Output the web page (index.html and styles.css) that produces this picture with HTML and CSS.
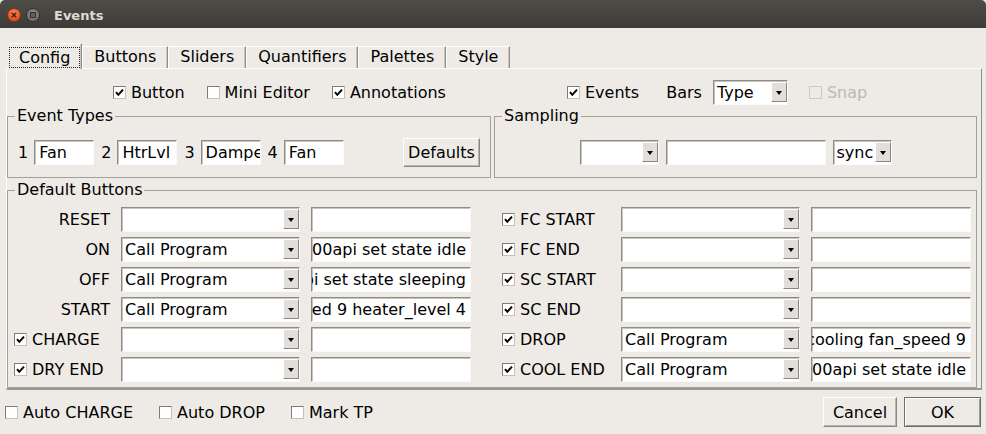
FILE: index.html
```html
<!DOCTYPE html>
<html>
<head>
<meta charset="utf-8">
<link rel="stylesheet" href="styles.css">
</head>
<body>
<div class="window">
  <div class="titlebar">
    <span class="tb-btn tb-close"><svg width="12" height="12" viewBox="0 0 12 12"><path d="M3.8 3.8 L8.2 8.2 M8.2 3.8 L3.8 8.2" stroke="#4a1a08" stroke-width="1.4" fill="none"/></svg></span>
    <span class="tb-btn tb-max"><span class="sq"></span></span>
    <span class="tb-title">Events</span>
  </div>

  <div class="tabs">
    <div class="tab sel"><span class="focus">Config</span></div>
    <div class="tab">Buttons</div>
    <div class="tab">Sliders</div>
    <div class="tab">Quantifiers</div>
    <div class="tab">Palettes</div>
    <div class="tab">Style</div>
  </div>

  <div class="pane">
    <div class="toprow">
      <div class="tr-left">
        <span class="chk"><span class="cb"><svg width="11" height="11" viewBox="0 0 11 11"><path d="M2 5.2 L4.3 7.8 L9 2.6" fill="none" stroke="#000" stroke-width="2"/></svg></span>Button</span>
        <span class="chk gap22"><span class="cb"></span>Mini Editor</span>
        <span class="chk gap22"><span class="cb"><svg width="11" height="11" viewBox="0 0 11 11"><path d="M2 5.2 L4.3 7.8 L9 2.6" fill="none" stroke="#000" stroke-width="2"/></svg></span>Annotations</span>
      </div>
      <div class="tr-right">
        <span class="chk"><span class="cb"><svg width="11" height="11" viewBox="0 0 11 11"><path d="M2 5.2 L4.3 7.8 L9 2.6" fill="none" stroke="#000" stroke-width="2"/></svg></span>Events</span>
        <span class="bars">Bars</span>
        <div class="combo w75"><span class="cv">Type</span><span class="arrow"><i></i></span></div>
        <span class="chk dis snap"><span class="cb"></span>Snap</span>
      </div>
    </div>

    <div class="groups">
      <fieldset class="group">
        <legend>Event Types</legend>
        <div class="et-row">
          <span class="num">1</span><div class="edit w60"><span>Fan</span></div>
          <span class="num">2</span><div class="edit w60"><span>HtrLvl</span></div>
          <span class="num">3</span><div class="edit w60"><span>Damper</span></div>
          <span class="num">4</span><div class="edit w60"><span>Fan</span></div>
          <button class="btn defaults">Defaults</button>
        </div>
      </fieldset>
      <fieldset class="group">
        <legend>Sampling</legend>
        <div class="samp-row">
          <div class="combo w79"><span class="cv"></span><span class="arrow"><i></i></span></div>
          <div class="edit w160"><span></span></div>
          <div class="combo w59"><span class="cv">sync</span><span class="arrow"><i></i></span></div>
        </div>
      </fieldset>
    </div>

    <fieldset class="group db">
      <legend>Default Buttons</legend>
      <div class="dbgrid">
        <span class="lbl">RESET</span>
        <div class="combo w179"><span class="cv"></span><span class="arrow"><i></i></span></div>
        <div class="edit w160"></div>
        <span class="lblc"><span class="cb"><svg width="11" height="11" viewBox="0 0 11 11"><path d="M2 5.2 L4.3 7.8 L9 2.6" fill="none" stroke="#000" stroke-width="2"/></svg></span>FC START</span>
        <div class="combo w179"><span class="cv"></span><span class="arrow"><i></i></span></div>
        <div class="edit w160"></div>

        <span class="lbl">ON</span>
        <div class="combo w179"><span class="cv">Call Program</span><span class="arrow"><i></i></span></div>
        <div class="edit w160 r"><span>00api set state idle</span></div>
        <span class="lblc"><span class="cb"><svg width="11" height="11" viewBox="0 0 11 11"><path d="M2 5.2 L4.3 7.8 L9 2.6" fill="none" stroke="#000" stroke-width="2"/></svg></span>FC END</span>
        <div class="combo w179"><span class="cv"></span><span class="arrow"><i></i></span></div>
        <div class="edit w160"></div>

        <span class="lbl">OFF</span>
        <div class="combo w179"><span class="cv">Call Program</span><span class="arrow"><i></i></span></div>
        <div class="edit w160 r"><span>api set state sleeping</span></div>
        <span class="lblc"><span class="cb"><svg width="11" height="11" viewBox="0 0 11 11"><path d="M2 5.2 L4.3 7.8 L9 2.6" fill="none" stroke="#000" stroke-width="2"/></svg></span>SC START</span>
        <div class="combo w179"><span class="cv"></span><span class="arrow"><i></i></span></div>
        <div class="edit w160"></div>

        <span class="lbl">START</span>
        <div class="combo w179"><span class="cv">Call Program</span><span class="arrow"><i></i></span></div>
        <div class="edit w160 r"><span>ed 9 heater_level 4</span></div>
        <span class="lblc"><span class="cb"><svg width="11" height="11" viewBox="0 0 11 11"><path d="M2 5.2 L4.3 7.8 L9 2.6" fill="none" stroke="#000" stroke-width="2"/></svg></span>SC END</span>
        <div class="combo w179"><span class="cv"></span><span class="arrow"><i></i></span></div>
        <div class="edit w160"></div>

        <span class="lblc first"><span class="cb"><svg width="11" height="11" viewBox="0 0 11 11"><path d="M2 5.2 L4.3 7.8 L9 2.6" fill="none" stroke="#000" stroke-width="2"/></svg></span>CHARGE</span>
        <div class="combo w179"><span class="cv"></span><span class="arrow"><i></i></span></div>
        <div class="edit w160"></div>
        <span class="lblc"><span class="cb"><svg width="11" height="11" viewBox="0 0 11 11"><path d="M2 5.2 L4.3 7.8 L9 2.6" fill="none" stroke="#000" stroke-width="2"/></svg></span>DROP</span>
        <div class="combo w179"><span class="cv">Call Program</span><span class="arrow"><i></i></span></div>
        <div class="edit w160 r"><span>cooling fan_speed 9</span></div>

        <span class="lblc first"><span class="cb"><svg width="11" height="11" viewBox="0 0 11 11"><path d="M2 5.2 L4.3 7.8 L9 2.6" fill="none" stroke="#000" stroke-width="2"/></svg></span>DRY END</span>
        <div class="combo w179"><span class="cv"></span><span class="arrow"><i></i></span></div>
        <div class="edit w160"></div>
        <span class="lblc"><span class="cb"><svg width="11" height="11" viewBox="0 0 11 11"><path d="M2 5.2 L4.3 7.8 L9 2.6" fill="none" stroke="#000" stroke-width="2"/></svg></span>COOL END</span>
        <div class="combo w179"><span class="cv">Call Program</span><span class="arrow"><i></i></span></div>
        <div class="edit w160 r"><span>00api set state idle</span></div>
      </div>
    </fieldset>
  </div>

  <div class="bottom">
    <span class="chk"><span class="cb"></span>Auto CHARGE</span>
    <span class="chk gap26"><span class="cb"></span>Auto DROP</span>
    <span class="chk gap26"><span class="cb"></span>Mark TP</span>
    <button class="btn cancel">Cancel</button>
    <button class="btn ok">OK</button>
  </div>
</div>
</body>
</html>
```

FILE: styles.css
```css
* { box-sizing: border-box; }
html, body { margin: 0; padding: 0; }
body {
  width: 986px;
  height: 434px;
  overflow: hidden;
  background: #eeebe7;
  font-family: "DejaVu Sans", sans-serif;
  font-size: 16px;
  color: #000;
}

/* title bar */
.titlebar {
  height: 28px;
  display: flex;
  align-items: center;
  padding: 2px 0 0 7px;
  background: linear-gradient(#4f4d48, #3c3b37);
  border-radius: 5px 5px 0 0;
}
.tb-btn {
  width: 14px;
  height: 14px;
  border-radius: 50%;
  display: flex;
  align-items: center;
  justify-content: center;
}
.tb-close {
  background: radial-gradient(circle at 50% 35%, #f68b5f, #e2511f 70%);
  border: 1px solid #8f3714;
  margin-right: 5px;
}
.tb-max {
  background: radial-gradient(circle at 50% 35%, #8b8984, #6a6863);
  border: 1px solid #353430;
}
.tb-max .sq {
  width: 6px;
  height: 6px;
  border: 1px solid #34332f;
  background: #5f5d58;
}
.tb-title {
  margin-left: 14px;
  color: #dfdbd2;
  font-weight: bold;
  font-size: 13px;
}

/* tabs */
.tabs {
  margin-top: 15px;
  padding-left: 9px;
  height: 25px;
  display: flex;
  align-items: flex-end;
}
.tab {
  height: 22px;
  padding: 0 11px;
  line-height: 20px;
  border-top: 1px solid #fff;
  border-left: 1px solid #fff;
  border-right: 1px solid #8f8d89;
  box-shadow: inset -1px 0 0 #c9c6c1;
  white-space: nowrap;
}
.tab.sel {
  height: 26px;
  margin-bottom: -1px;
  padding: 3px 1px 2px 0;
  border-left: none;
  background: #eeebe7;
  position: relative;
  z-index: 1;
}
.focus {
  display: block;
  height: 21px;
  line-height: 19px;
  padding: 0 9px;
  border: 1px dotted #222;
}

/* pane */
.pane {
  margin: 0 4px 0 6px;
  padding: 11px 4px 0 0;
  border-top: 1px solid #fff;
  border-left: 1px solid #fff;
  border-right: 1px solid #8f8d89;
  border-bottom: 2px solid #9c9995;
}

.toprow {
  display: grid;
  grid-template-columns: 560px 1fr;
  height: 24px;
  align-items: center;
}
.tr-left, .tr-right {
  display: flex;
  align-items: center;
}
.tr-left { padding-left: 106px; }

.chk {
  display: inline-flex;
  align-items: center;
  white-space: nowrap;
}
.gap22 { margin-left: 22px; }
.gap26 { margin-left: 26px; }
.cb {
  flex: none;
  width: 13px;
  height: 13px;
  margin-right: 5px;
  border: 1px solid;
  border-color: #7f7d79 #c4c1bc #c4c1bc #7f7d79;
  background: #fff;
  display: inline-flex;
  align-items: center;
  justify-content: center;
}
.chk.dis { color: #bcb9b4; }
.chk.dis .cb { background: transparent; border-color: #cdcac5; }
.bars { margin-left: 27px; }
.tr-right .combo { margin-left: 11px; }
.snap { margin-left: 21px; }

/* fields */
.combo {
  height: 25px;
  display: flex;
  background: #fff;
  border: 1px solid;
  border-color: #8e8c88 #fbfaf9 #fbfaf9 #8e8c88;
  box-shadow: inset 1px 1px 0 #c6c4bf;
}
.cv {
  flex: 1;
  min-width: 0;
  padding-left: 3px;
  line-height: 23px;
  overflow: hidden;
  white-space: nowrap;
}
.arrow {
  flex: none;
  width: 16px;
  margin: 1px 0 2px;
  background: #e2dfdb;
  border: 1px solid;
  border-color: #fff #8a8884 #8a8884 #fff;
  display: flex;
  align-items: center;
  justify-content: center;
}
.arrow i {
  width: 0;
  height: 0;
  border-left: 3.5px solid transparent;
  border-right: 3.5px solid transparent;
  border-top: 4px solid #000;
  margin-top: 1px;
}
.edit {
  height: 25px;
  background: #fff;
  border: 1px solid;
  border-color: #8e8c88 #fbfaf9 #fbfaf9 #8e8c88;
  box-shadow: inset 1px 1px 0 #c6c4bf;
  padding: 0 4px;
  display: flex;
  align-items: center;
  overflow: hidden;
  white-space: nowrap;
  line-height: 23px;
}
.edit.r { justify-content: flex-end; }
.w60 { width: 60px; }
.w75 { width: 75px; }
.w79 { width: 79px; }
.w59 { width: 59px; }
.w160 { width: 160px; }
.w179 { width: 179px; }

/* buttons */
.btn {
  font: inherit;
  color: #000;
  background: #eeebe7;
  border: 1px solid;
  border-color: #fff #8a8884 #8a8884 #fff;
  box-shadow: inset -1px -1px 0 #bab7b2;
  display: flex;
  align-items: center;
  justify-content: center;
  padding: 0;
}

/* group boxes */
.groups {
  display: grid;
  grid-template-columns: 484px 483px;
  column-gap: 3px;
  margin-top: 2px;
}
fieldset.group {
  margin: 0;
  padding: 0;
  min-width: 0;
  border: 1px solid #a3a09b;
}
fieldset.group legend {
  margin-left: 7px;
  padding: 0 2px;
  line-height: 20px;
}
.et-row {
  display: flex;
  align-items: center;
  height: 29px;
  margin: 12px 10px 10px 10px;
}
.num { margin-right: 6px; }
.et-row .edit { margin-right: 7px; }
.defaults {
  margin-left: auto;
  width: 77px;
  height: 29px;
}
.samp-row {
  display: flex;
  justify-content: center;
  align-items: center;
  gap: 7px;
  height: 29px;
  margin: 12px 0 10px;
}

fieldset.db { margin-top: 2px; }
.dbgrid {
  display: grid;
  grid-template-columns: 108px 190px 191px 119px 190px 160px;
  grid-auto-rows: 25px;
  row-gap: 5px;
  align-items: center;
  margin: 7px 5px 5px 5px;
}
.lbl {
  text-align: right;
  padding-right: 11px;
}
.lblc {
  display: flex;
  align-items: center;
  white-space: nowrap;
}
.lblc.first { padding-left: 1px; }

/* bottom */
.bottom {
  display: flex;
  align-items: center;
  height: 30px;
  margin-top: 7px;
  padding: 0 5px;
}
.cancel {
  margin-left: auto;
  width: 74px;
  height: 30px;
}
.ok {
  margin-left: 7px;
  width: 77px;
  height: 30px;
  border: 1px solid #6e6c68;
  box-shadow: inset 1px 1px 0 #fff, inset -1px -1px 0 #9d9a95;
}
```
